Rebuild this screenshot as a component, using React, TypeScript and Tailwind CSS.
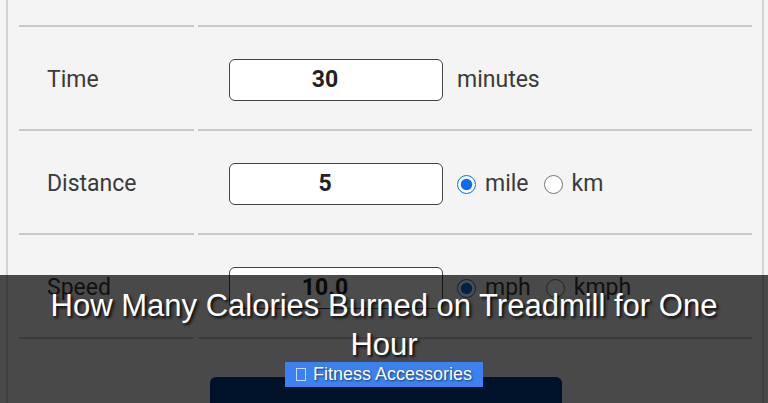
import { ReactNode } from 'react';

type Row = {
  label: string;
  value: string;
  unit?: string;
  options?: { name: string; checked: boolean }[];
};

const rows: Row[] = [
  { label: 'Time', value: '30', unit: 'minutes' },
  {
    label: 'Distance',
    value: '5',
    options: [
      { name: 'mile', checked: true },
      { name: 'km', checked: false },
    ],
  },
  {
    label: 'Speed',
    value: '10.0',
    options: [
      { name: 'mph', checked: true },
      { name: 'kmph', checked: false },
    ],
  },
];

function Cell({ children, className = '' }: { children?: ReactNode; className?: string }) {
  return (
    <div className={`border-b-2 border-[#c8c8c8] flex items-center ${className}`}>{children}</div>
  );
}

function Radio({ name, checked }: { name: string; checked: boolean }) {
  return (
    <label className="flex items-center gap-[9px] mr-[15px]">
      <input
        type="radio"
        checked={checked}
        readOnly
        className="w-[19px] h-[19px] m-0 accent-[#0b6cf2]"
      />
      <span>{name}</span>
    </label>
  );
}

export default function App() {
  return (
    <div className="relative h-[403px] overflow-hidden bg-[#f4f4f4]">
      <div
        className="ml-[6px] w-[758px] h-full border-x-2 border-[#d2d2d2] pl-[11px] pr-[10px] text-[23px] text-[#3a3a3a]"
        style={{ fontFamily: 'Roboto, "Noto Sans", sans-serif' }}
      >
        <div className="grid grid-cols-[175px_1fr] gap-x-[4px]">
          {/* tail of the row above */}
          <Cell className="h-[27px]" />
          <Cell className="h-[27px]" />

          {rows.map((row) => (
            <div key={row.label} className="contents">
              <Cell className="h-[104px] pl-[28px] pt-[4px]">{row.label}</Cell>
              <Cell className="h-[104px] pl-[31px] pt-[4px]">
                <div className="w-[214px] h-[42px] pr-[22px] rounded-md border-[1.5px] border-[#444] bg-white flex items-center justify-center font-bold text-[#222]">
                  {row.value}
                </div>
                <div className="ml-[14px] flex items-center">
                  {row.unit && <span>{row.unit}</span>}
                  {row.options?.map((o) => (
                    <Radio key={o.name} name={o.name} checked={o.checked} />
                  ))}
                </div>
              </Cell>
            </div>
          ))}
        </div>

        <button className="block mx-auto mt-[38px] w-[352px] h-[74px] rounded-md bg-[#003a8c] text-white font-bold">
          Calculate
        </button>
      </div>

      {/* caption banner */}
      <div
        className="absolute left-0 right-0 bottom-0 h-[128px] bg-black/70 px-6 pt-[11px] flex flex-col items-center"
        style={{ fontFamily: '"Liberation Sans", Arial, sans-serif' }}
      >
        <h1 className="text-white text-[31px] leading-[39px] text-center [text-shadow:2px_2px_3px_rgba(0,0,0,0.9)]">
          How Many Calories Burned on Treadmill for One Hour
        </h1>
        <span className="-mt-[2px] h-[25px] px-[11px] bg-[#3b82f0] text-white text-[18px] leading-[25px] flex items-center gap-[7px] [text-shadow:1px_1px_2px_rgba(0,0,0,0.6)]">
          <span className="inline-block w-[10px] h-[13px] border border-white/70" />
          Fitness Accessories
        </span>
      </div>
    </div>
  );
}
